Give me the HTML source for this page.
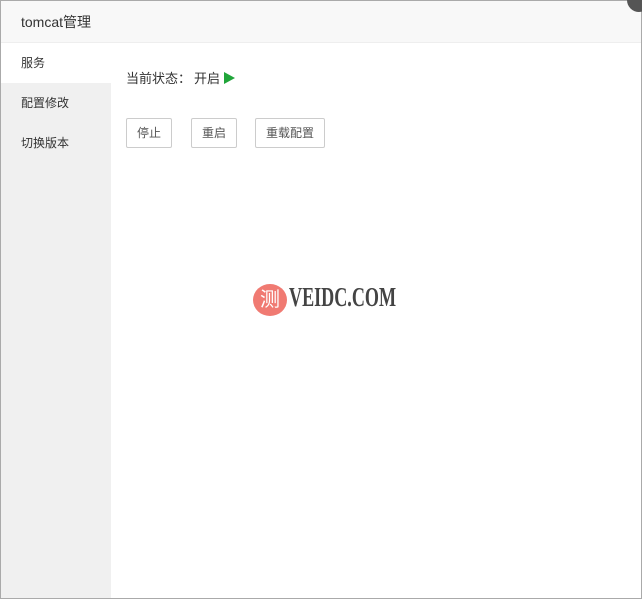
<!DOCTYPE html>
<html><head><meta charset="utf-8"><style>
body{margin:0;width:642px;height:599px;overflow:hidden;background:#fff;font-family:"Liberation Sans","Noto Sans CJK SC",sans-serif;position:relative}
.frame{position:absolute;left:0;top:0;width:640px;height:597px;border:1px solid #aaa;background:#fff}
.title{position:absolute;left:0;top:0;width:640px;height:41px;background:#f8f8f8;border-bottom:1px solid #eee;font-size:14px;color:#333;line-height:42px;text-indent:20px}
.side{position:absolute;left:0;top:42px;width:110px;height:555px;background:#f0f0f0}
.side div{height:40px;line-height:40px;font-size:12px;color:#333;padding-left:20px}
.side .act{background:#fff}
.st{position:absolute;left:125px;top:67px;font-size:13px;color:#333}
.tri{display:inline-block;width:0;height:0;border-left:11px solid #20a53a;border-top:6px solid transparent;border-bottom:6px solid transparent;vertical-align:-1px;margin-left:4px}
.btn{position:absolute;top:117px;height:28px;border:1px solid #ccc;border-radius:2px;font-size:12px;color:#555;line-height:28px;text-align:center;background:#fff}
.close{position:absolute;left:627px;top:-12px;width:24px;height:24px;border-radius:50%;background:#555}
.logo{position:absolute;left:252px;top:283px;width:34px;height:32px;border-radius:50%;background:#f07a72;color:#fff;font-size:20px;line-height:32px;text-align:center}
.lt{position:absolute;left:288px;top:281px;font-family:"Liberation Serif",serif;font-weight:bold;font-size:27px;color:#444;transform:scaleX(0.67);transform-origin:left}
</style></head><body>
<div class="frame">
<div class="title">tomcat管理</div>
<div class="side"><div class="act">服务</div><div>配置修改</div><div>切换版本</div></div>
<div class="st">当前状态<span style="letter-spacing:3px">：</span>开启<span class="tri"></span></div>
<div class="btn" style="left:125px;width:44px">停止</div>
<div class="btn" style="left:190px;width:44px">重启</div>
<div class="btn" style="left:254px;width:68px">重载配置</div>
<div class="logo">测</div><div class="lt">VEIDC.COM</div>
</div>
<div class="close"></div>
</body></html>
